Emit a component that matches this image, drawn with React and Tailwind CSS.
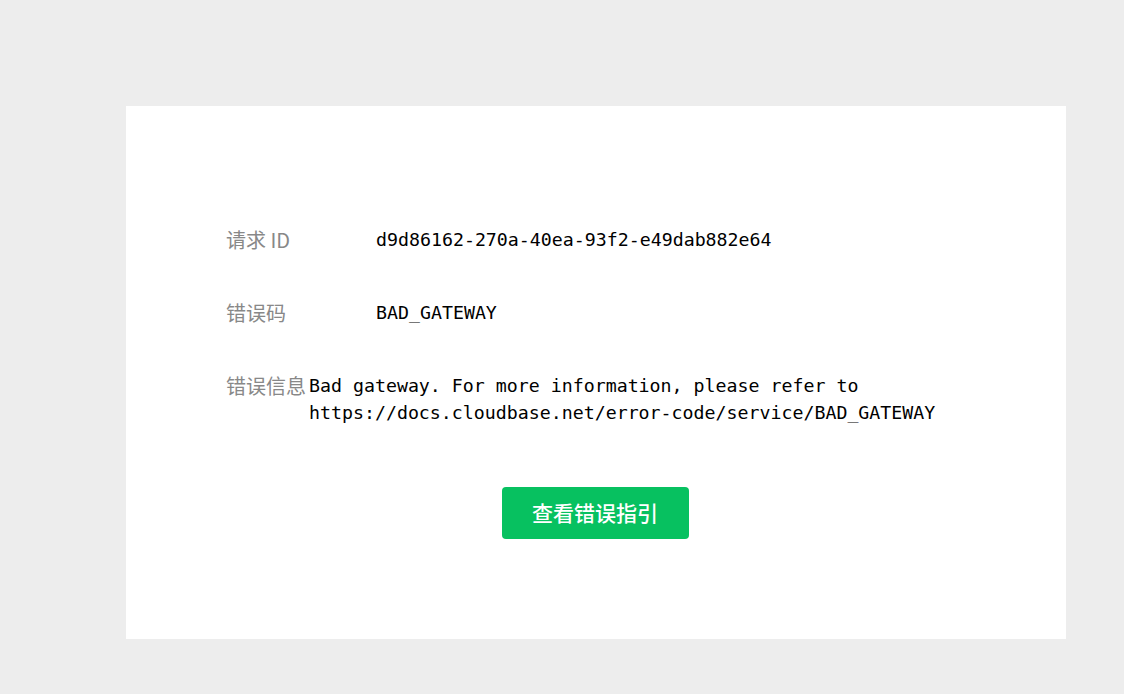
export default function App() {
  const label = "shrink-0 text-[20px] leading-[27px] text-[#888888] font-['Noto_Sans_CJK_SC','Noto_Sans',sans-serif]";
  const value = "text-[18.25px] leading-[27px] text-black font-['DejaVu_Sans_Mono','Liberation_Mono',monospace]";
  return (
    <div className="min-h-screen bg-[#ededed] pt-[106px] pl-[126px]">
      <div className="w-[940px] h-[533px] bg-white pt-[120px] px-[100px]">
        <div className="flex items-start mb-[46px]">
          <div className={`${label} w-[150px]`}>请求 ID</div>
          <div className={value}>d9d86162-270a-40ea-93f2-e49dab882e64</div>
        </div>
        <div className="flex items-start mb-[46px]">
          <div className={`${label} w-[150px]`}>错误码</div>
          <div className={value}>BAD_GATEWAY</div>
        </div>
        <div className="flex items-start">
          <div className={`${label} w-[83px]`}>错误信息</div>
          <div className={`${value} min-w-0`}>
            Bad gateway. For more information, please refer to https://docs.cloudbase.net/error-code/service/BAD_GATEWAY
          </div>
        </div>
        <div className="flex justify-center mt-[61px] pr-[2px]">
          <button className="w-[187px] h-[52px] rounded-[4px] bg-[#07c160] text-white text-[21px] font-medium font-['Noto_Sans_CJK_SC',sans-serif] flex items-center justify-center">
            查看错误指引
          </button>
        </div>
      </div>
    </div>
  );
}
